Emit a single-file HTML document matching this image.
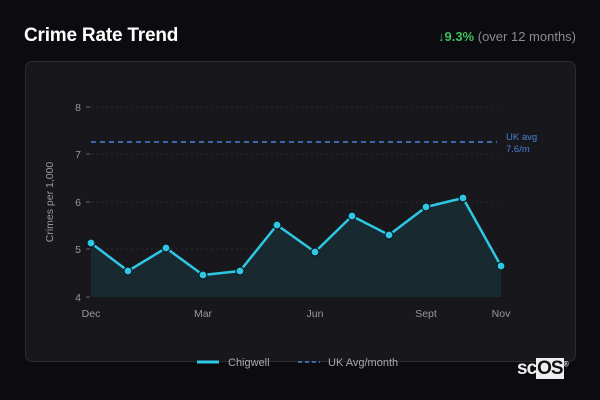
<!DOCTYPE html>
<html><head><style>
body{margin:0;width:600px;height:400px;background:#0c0c10;font-family:"Liberation Sans","DejaVu Sans",sans-serif;overflow:hidden;position:relative}
.t{position:absolute;left:24px;top:25px;color:#fff;font-weight:bold;font-size:19px;letter-spacing:-0.2px}
.ch{position:absolute;right:24px;top:29px;font-size:13px;color:#8a8a90}
.ch b{color:#3fbf5f}
.card{position:absolute;left:25px;top:61px;width:549px;height:299px;background:#18181c;border:1px solid #2c2c30;border-radius:7px}
svg{position:absolute;left:0;top:0}
.logo{position:absolute;left:517px;top:358px;font-family:"Liberation Sans",sans-serif;font-weight:bold;font-size:19px;color:#eee;letter-spacing:-1px}
.logo span{background:#eee;color:#111;padding:0 1px}
</style></head><body>
<div class="t">Crime Rate Trend</div>
<div class="ch"><b>↓9.3%</b> (over 12 months)</div>
<div class="card"></div>
<svg width="600" height="400" font-family="Liberation Sans, sans-serif" font-size="10.5">
<g stroke="#2c2c31" stroke-dasharray="2,3" stroke-width="1">
<line x1="91" y1="107" x2="497" y2="107"/><line x1="91" y1="154" x2="497" y2="154"/><line x1="91" y1="202" x2="497" y2="202"/><line x1="91" y1="249" x2="497" y2="249"/></g>
<g stroke="#666" stroke-width="1"><line x1="86" y1="107" x2="90" y2="107"/><line x1="86" y1="154" x2="90" y2="154"/><line x1="86" y1="202" x2="90" y2="202"/><line x1="86" y1="249" x2="90" y2="249"/><line x1="86" y1="297" x2="90" y2="297"/></g>
<g fill="#999" text-anchor="end"><text x="81" y="111">8</text><text x="81" y="158">7</text><text x="81" y="206">6</text><text x="81" y="253">5</text><text x="81" y="301">4</text></g>
<text transform="translate(53,202) rotate(-90)" fill="#999" text-anchor="middle">Crimes per 1,000</text>
<polygon fill="#18292f" points="91,297 91,243 128,271 166,248 203,275 240,271 277,225 315,252 352,216 389,235 426,207 463,198 501,266 501,297"/>
<line x1="91" y1="142" x2="497" y2="142" stroke="#4a7fd8" stroke-width="1.5" stroke-dasharray="5,4"/>
<text x="506" y="140" fill="#4a7fd8" font-size="9.5">UK avg</text><text x="506" y="152" fill="#4a7fd8" font-size="9.5">7.6/m</text>
<polyline fill="none" stroke="#2ec8e4" stroke-width="2.5" stroke-linejoin="round" points="91,243 128,271 166,248 203,275 240,271 277,225 315,252 352,216 389,235 426,207 463,198 501,266"/>
<g fill="#2ec8e4" stroke="#0c1a20" stroke-width="1.2">
<circle cx="91" cy="243" r="4"/><circle cx="128" cy="271" r="4"/><circle cx="166" cy="248" r="4"/><circle cx="203" cy="275" r="4"/><circle cx="240" cy="271" r="4"/><circle cx="277" cy="225" r="4"/><circle cx="315" cy="252" r="4"/><circle cx="352" cy="216" r="4"/><circle cx="389" cy="235" r="4"/><circle cx="426" cy="207" r="4"/><circle cx="463" cy="198" r="4"/><circle cx="501" cy="266" r="4"/></g>
<g fill="#999" text-anchor="middle"><text x="91" y="317">Dec</text><text x="203" y="317">Mar</text><text x="315" y="317">Jun</text><text x="426" y="317">Sept</text><text x="501" y="317">Nov</text></g>
<line x1="197" y1="362" x2="219" y2="362" stroke="#2ec8e4" stroke-width="3"/>
<text x="228" y="366" fill="#aaa" font-size="11">Chigwell</text>
<line x1="298" y1="362" x2="320" y2="362" stroke="#4a7fd8" stroke-width="1.5" stroke-dasharray="4,3"/>
<text x="328" y="366" fill="#aaa" font-size="11">UK Avg/month</text>
</svg>
<div class="logo">sc<span>OS</span><sup style="font-size:7px">®</sup></div>
</body></html>
